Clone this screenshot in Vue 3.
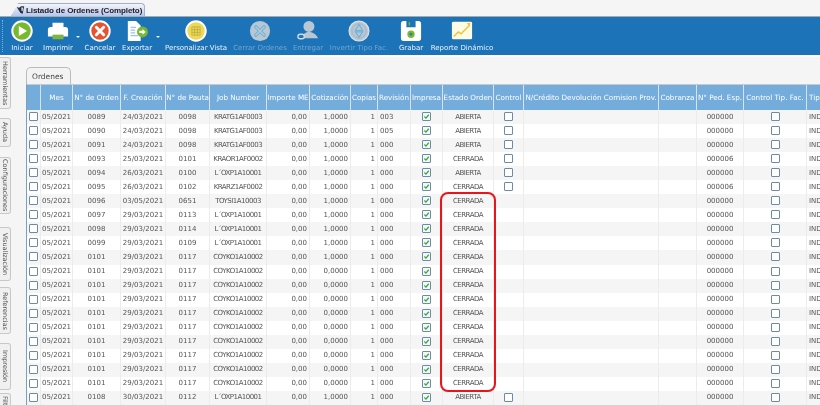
<script setup>
const cols = [
  { k: 'chk', t: '', w: 14, type: 'box' },
  { k: 'mes', t: 'Mes', w: 32 },
  { k: 'ord', t: 'N° de Orden', w: 48 },
  { k: 'fec', t: 'F. Creación', w: 45 },
  { k: 'pau', t: 'N° de Pauta', w: 44 },
  { k: 'job', t: 'Job Number', w: 57, caps: true },
  { k: 'imp', t: 'Importe ME', w: 43, align: 'right' },
  { k: 'cot', t: 'Cotización', w: 41, align: 'right' },
  { k: 'cop', t: 'Copias', w: 27, align: 'right' },
  { k: 'rev', t: 'Revisión', w: 33, align: 'left' },
  { k: 'pre', t: 'Impresa', w: 32, type: 'check' },
  { k: 'est', t: 'Estado Orden', w: 51, caps: true },
  { k: 'ctl', t: 'Control', w: 30, type: 'opt' },
  { k: 'ncr', t: 'N/Crédito Devolución Comision Prov.', w: 135 },
  { k: 'cob', t: 'Cobranza', w: 38 },
  { k: 'ped', t: 'N° Ped. Esp.', w: 47 },
  { k: 'tip', t: 'Control Tip. Fac.', w: 63, type: 'optall' },
  { k: 'tipo', t: 'Tipo', w: 40, align: 'left', hleft: true }
]
const raw = [
  ['0089','24/03/2021','0098','KRATG1AF0003','1,0000','003','ABIERTA','000000'],
  ['0090','24/03/2021','0098','KRATG1AF0003','1,0000','005','ABIERTA','000000'],
  ['0091','24/03/2021','0098','KRATG1AF0003','1,0000','000','ABIERTA','000000'],
  ['0093','25/03/2021','0101','KRAOR1AF0002','1,0000','000','CERRADA','000006'],
  ['0094','26/03/2021','0100','L´OXP1A10001','1,0000','000','ABIERTA','000000'],
  ['0095','26/03/2021','0102','KRARZ1AF0002','1,0000','000','CERRADA','000006'],
  ['0096','03/05/2021','0651','TOYSI1A10003','1,0000','000','CERRADA','000000'],
  ['0097','29/03/2021','0113','L´OXP1A10001','1,0000','000','CERRADA','000000'],
  ['0098','29/03/2021','0114','L´OXP1A10001','1,0000','000','CERRADA','000000'],
  ['0099','29/03/2021','0109','L´OXP1A10001','1,0000','000','CERRADA','000000'],
  ['0101','29/03/2021','0117','COYKO1A10002','1,0000','000','CERRADA','000000'],
  ['0101','29/03/2021','0117','COYKO1A10002','0,0000','000','CERRADA','000000'],
  ['0101','29/03/2021','0117','COYKO1A10002','0,0000','000','CERRADA','000000'],
  ['0101','29/03/2021','0117','COYKO1A10002','0,0000','000','CERRADA','000000'],
  ['0101','29/03/2021','0117','COYKO1A10002','0,0000','000','CERRADA','000000'],
  ['0101','29/03/2021','0117','COYKO1A10002','0,0000','000','CERRADA','000000'],
  ['0101','29/03/2021','0117','COYKO1A10002','0,0000','000','CERRADA','000000'],
  ['0101','29/03/2021','0117','COYKO1A10002','0,0000','000','CERRADA','000000'],
  ['0101','29/03/2021','0117','COYKO1A10002','0,0000','000','CERRADA','000000'],
  ['0101','29/03/2021','0117','COYKO1A10002','0,0000','000','CERRADA','000000'],
  ['0108','30/03/2021','0112','L´OXP1A10001','1,0000','000','ABIERTA','000000']
]
const rows = raw.map((r, i) => ({
  id: i,
  full: i < 6 || i === 20,
  mes: '05/2021', ord: r[0], fec: r[1], pau: r[2], job: r[3], imp: '0,00', cot: r[4], cop: '1', rev: r[5], est: r[6],
  ped: r[7],
  tipo: 'IND'
}))
const template = cols.map(c => c.w + 'px').join(' ')
const sideTabs = [
  { t: 'Herramientas', h: 52, m: 0 },
  { t: 'Ayuda', h: 29, m: 9 },
  { t: 'Configuraciones', h: 57, m: 10 },
  { t: 'Visualización', h: 54, m: 13 },
  { t: 'Referencias', h: 47, m: 6 },
  { t: 'Impresión', h: 47, m: 9 },
  { t: 'Filtros', h: 26, m: 3 }
]
</script>

<template>
  <div class="app">
    <div class="tabstrip">
      <div class="doc-tab">
        <svg class="tab-ico" viewBox="0 0 12 12"><path d="M1 2l3 1 3-2 4 0-1 4-1 6-3-1-2-3z" fill="#2a3340"/><path d="M7 2.500l2.500 0-.6 5-1.600-.5z" fill="#cfd6de"/></svg>
        <span>Listado de Ordenes (Completo)</span>
      </div>
    </div>
    <div class="toolbar">
      <div class="grip"></div>
      <div class="tb tb-iniciar">
        <svg viewBox="0 0 24 24"><circle cx="12" cy="12" r="10.600" fill="#79b92e" stroke="#fff" stroke-width="2.200"/><path d="M8.500 6.500v11l9-5.500z" fill="#fff"/></svg>
        <span>Iniciar</span>
      </div>
      <div class="tb tb-imprimir">
        <svg viewBox="0 0 24 24"><rect x="6" y="3" width="12" height="5" fill="#fff"/><path d="M1 10.500a3 3 0 0 1 3-3h16a3 3 0 0 1 3 3V18H1z" fill="#fff"/><rect x="6" y="16" width="12" height="5" fill="#7db63a"/></svg>
        <span>Imprimir</span>
      </div>
      <i class="caret caret-a"></i>
      <div class="tb tb-cancelar">
        <svg viewBox="0 0 24 24"><circle cx="12" cy="12" r="10.600" fill="#e8522f" stroke="#fff" stroke-width="2.200"/><path d="M8 8l8 8M16 8l-8 8" stroke="#fff" stroke-width="3.200" stroke-linecap="round"/></svg>
        <span>Cancelar</span>
      </div>
      <div class="tb tb-exportar">
        <svg viewBox="0 0 24 24"><path d="M2 1h9l5 5v17H2z" fill="#fff"/><path d="M5 8h6M5 11h5M5 14h5M5 17h8" stroke="#9cc5e3" stroke-width="1.200"/><circle cx="18" cy="13" r="6" fill="#76b82f"/><path d="M14.500 11.800h3.500v-2l3.500 3.200-3.500 3.200v-2h-3.500z" fill="#fff"/></svg>
        <span>Exportar</span>
      </div>
      <i class="caret caret-b"></i>
      <div class="tb tb-vista">
        <svg viewBox="0 0 24 24"><circle cx="12" cy="12" r="10.600" fill="#ecd95a" stroke="#fff" stroke-width="2.200"/><path d="M7.500 7.500h9v9h-9zM7.500 10.500h9M7.500 13.500h9M10.500 7.500v9M13.500 7.500v9" fill="none" stroke="#b9a93a" stroke-width=".8"/></svg>
        <span>Personalizar Vista</span>
      </div>
      <div class="tb off tb-cerrar">
        <svg viewBox="0 0 24 24"><circle cx="12" cy="12" r="11" fill="#b9c7d2"/><path d="M7.500 7.500l9 9M16.500 7.500l-9 9" stroke="#5bb0dc" stroke-width="3.600" stroke-linecap="round"/><path d="M7.500 7.500l9 9M16.500 7.500l-9 9" stroke="#b9c7d2" stroke-width="1.600" stroke-linecap="round"/></svg>
        <span>Cerrar Ordenes</span>
      </div>
      <div class="tb off tb-entregar">
        <svg viewBox="0 0 24 24"><circle cx="13" cy="7" r="6" fill="#b9c7d2"/><path d="M5 20c1-5 5-7 8-7s8 2 10 7z" fill="#b9c7d2"/><rect x="1" y="15.500" width="7" height="5" rx="2.500" fill="#1c73b7" stroke="#d2dbe3" stroke-width="1.500"/></svg>
        <span>Entregar</span>
      </div>
      <div class="tb off tb-invertir">
        <svg viewBox="0 0 24 24"><circle cx="12" cy="12" r="10.800" fill="#b9c7d2" stroke="#d8e0e6" stroke-width="1.400"/><circle cx="12" cy="12" r="7.800" fill="none" stroke="#9eb0bf" stroke-width=".8"/><path d="M12 5l4 6.500h-8zM12 19l-4-6h8z" fill="none" stroke="#6fb3dc" stroke-width="1.200"/></svg>
        <span>Invertir Tipo Fac.</span>
      </div>
      <div class="tb tb-grabar">
        <svg viewBox="0 0 24 24"><path d="M4 1h3v7h10V1h3a3 3 0 0 1 3 3v16a3 3 0 0 1-3 3H4a3 3 0 0 1-3-3V4a3 3 0 0 1 3-3z" fill="#fff"/><rect x="9.500" y="2" width="1.500" height="4" fill="#7cb82f"/><circle cx="12" cy="15.500" r="4" fill="#7cb82f"/><circle cx="12" cy="15.500" r="1.500" fill="#2a7ab5"/></svg>
        <span>Grabar</span>
      </div>
      <div class="tb tb-reporte">
        <svg viewBox="0 0 24 24"><rect x="1" y="2" width="22" height="19" rx="1.500" fill="#fdfbe4"/><path d="M3 18l5-5 3 2 6-6 3-3" fill="none" stroke="#eec536" stroke-width="1.600"/><path d="M17 3.500l4-.5-.5 4z" fill="#eec536"/></svg>
        <span>Reporte Dinámico</span>
      </div>
    </div>

    <div class="body">
      <div class="side">
        <div v-for="s in sideTabs" :key="s.t" class="side-tab" :style="{ height: s.h + 'px', marginTop: s.m + 'px' }">
          <span>{{ s.t }}</span>
        </div>
      </div>
      <div class="main">
        <div class="sub-tab"><span>Ordenes</span></div>
        <div class="grid">
          <div class="head" :style="{ gridTemplateColumns: template }">
            <div v-for="c in cols" :key="c.k" class="hcell" :class="{ hleft: c.hleft }">{{ c.t }}</div>
          </div>
          <div v-for="r in rows" :key="r.id" class="row" :class="{ odd: r.id % 2 === 0 }" :style="{ gridTemplateColumns: template }">
            <div v-for="c in cols" :key="c.k" class="cell" :class="['al-' + (c.align || 'center'), { caps: c.caps }]">
              <i v-if="c.type === 'box'" class="box"></i>
              <i v-else-if="c.type === 'check'" class="box on">
                <svg viewBox="0 0 10 10"><path d="M2 5l2.200 2.400L8.200 2.500" fill="none" stroke="#3aa72c" stroke-width="1.700"/></svg>
              </i>
              <i v-else-if="c.type === 'opt' && r.full" class="box"></i>
              <i v-else-if="c.type === 'optall'" class="box"></i>
              <template v-else-if="!c.type">{{ r[c.k] }}</template>
            </div>
          </div>
        </div>
        <div class="mark"></div>
      </div>
    </div>
  </div>
</template>

<style>
html, body { margin: 0; padding: 0; background: #f5f5f5; overflow: hidden; }
</style>

<style scoped>
.app {
  width: 820px;
  height: 405px;
  overflow: hidden;
  background: #f5f5f5;
  font-family: "DejaVu Sans", sans-serif;
  color: #555;
  display: flex;
  flex-direction: column;
  filter: blur(0.4px);
}
.tabstrip {
  height: 17px;
  box-sizing: border-box;
  padding-left: 11px;
  flex: none;
  display: flex;
  align-items: flex-end;
  border-bottom: 1px solid #a9a9a9;
}
.doc-tab {
  width: 134px;
  height: 13px;
  box-sizing: border-box;
  display: flex;
  align-items: center;
  gap: 1px;
  padding-left: 4px;
  border: 1px solid #9fb0d0;
  border-bottom: 0;
  border-radius: 4px 4px 0 0;
  background: linear-gradient(#f4f6fc, #b7c6ee);
  clip-path: polygon(0 100%, 7px 0, 100% 0, 100% 100%);
  font-family: "Liberation Sans", sans-serif;
  font-weight: 700;
  font-size: 8px;
  letter-spacing: -.1px;
  color: #222;
  white-space: nowrap;
}
.tab-ico { width: 9px; height: 10px; flex: none; }
.toolbar {
  height: 40px;
  flex: none;
  background: #1c73b7;
  border-bottom: 2px solid #fff;
  display: flex;
  position: relative;
  font-size: 7px;
  color: #eaf3fa;
  box-sizing: border-box;
}
.grip {
  position: absolute;
  left: 2px;
  top: 3px;
  bottom: 3px;
  border-left: 1px dotted #7fb0d6;
}
.tb {
  display: flex;
  flex-direction: column;
  align-items: center;
  flex: none;
  padding-top: 3px;
  white-space: nowrap;
}
.tb svg { width: 22px; height: 22px; display: block; }
.tb span { margin-top: 2px; line-height: 8px; }
.off { color: #6fa6d0; }
.tb-iniciar { width: 32px; margin-left: 6px; }
.tb-imprimir { width: 32px; margin-left: 4px; }
.tb-cancelar { width: 32px; margin-left: 4px; }
.tb-exportar { width: 32px; margin-left: 5px; }
.tb-vista { width: 62px; margin-left: 5px; }
.tb-cerrar { width: 52px; margin-left: 7px; }
.tb-entregar { width: 32px; margin-left: 6px; }
.tb-invertir { width: 60px; margin-left: 5px; }
.tb-grabar { width: 24px; margin-left: 10px; }
.tb-reporte { width: 60px; margin-left: 9px; }
.caret {
  width: 0;
  height: 0;
  border: 2px solid transparent;
  border-top: 2px solid #eaf3fa;
  border-bottom: 0;
  margin-top: 19px;
  flex: none;
}
.caret-a { margin-left: 2px; }
.caret-b { margin-left: 3px; }
.body { flex: 1; display: flex; min-height: 0; }
.side {
  width: 26px;
  flex: none;
  display: flex;
  flex-direction: column;
  align-items: flex-start;
}
.side-tab {
  width: 11px;
  flex: none;
  box-sizing: border-box;
  background: #f0f0f0;
  border: 1px solid #c8c8c8;
  border-left: 0;
  border-radius: 0 3px 3px 0;
  display: flex;
  align-items: center;
  justify-content: center;
  overflow: hidden;
}
.side-tab span {
  writing-mode: vertical-rl;
  font-size: 6.5px;
  color: #555;
  white-space: nowrap;
}
.main { flex: 1; min-width: 0; position: relative; padding-top: 10px; }
.sub-tab {
  width: 45px;
  height: 17px;
  box-sizing: border-box;
  border: 1px solid #bbb;
  border-bottom: 0;
  border-radius: 5px 5px 0 0;
  background: #f3f3f3;
  display: flex;
  align-items: center;
  padding-left: 5px;
  font-size: 7.5px;
  color: #444;
}
.grid {
  border-top: 1px solid #c9c9c9;
  border-left: 1px solid #7d9db8;
  background: #fff;
}
.head {
  display: grid;
  height: 25px;
  background: #74acdb;
}
.hcell {
  border-right: 1px solid #d8e3ec;
  color: #fff;
  font-size: 7.2px;
  display: flex;
  align-items: center;
  justify-content: center;
  white-space: nowrap;
  overflow: hidden;
}
.hcell.hleft { justify-content: flex-start; padding-left: 2px; }
.row { display: grid; height: 14.05px; background: #fff; }
.row.odd { background: #f5f5f5; }
.cell {
  border-right: 1px solid #ececec;
  font-size: 7px;
  color: #555;
  display: flex;
  align-items: center;
  white-space: nowrap;
  overflow: hidden;
  padding: 0 2px 1px;
  box-sizing: border-box;
}
.cell.caps { letter-spacing: -.5px; }
.al-center { justify-content: center; }
.al-right { justify-content: flex-end; }
.al-left { justify-content: flex-start; }
.box {
  width: 9px;
  height: 9px;
  box-sizing: border-box;
  border: 1px solid #6d8ba5;
  border-radius: 1px;
  background: #fff;
  display: flex;
  align-items: center;
  justify-content: center;
  flex: none;
}
.box.on { background: #f2f7fb; }
.box svg { display: block; width: 7px; height: 7px; }
.mark {
  position: absolute;
  left: 414px;
  top: 135px;
  width: 56px;
  height: 200px;
  box-sizing: border-box;
  border: 2px solid #e8161c;
  border-radius: 8px;
  pointer-events: none;
}
</style>
